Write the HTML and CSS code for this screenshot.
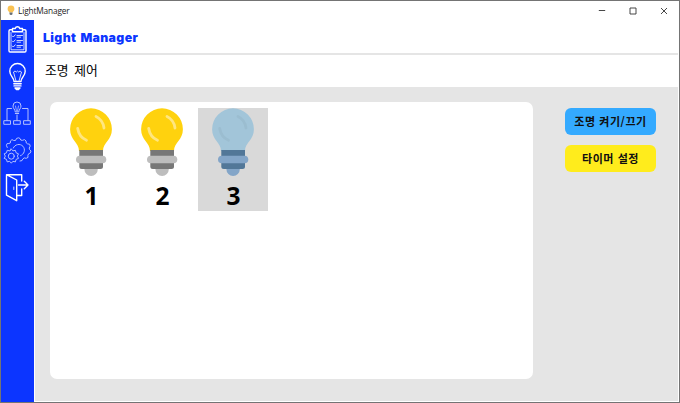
FILE: index.html
```html
<!DOCTYPE html>
<html lang="ko">
<head>
<meta charset="utf-8">
<title>LightManager</title>
<link rel="stylesheet" href="styles.css">
</head>
<body>
<svg class="defs" width="0" height="0" aria-hidden="true">
  <symbol id="lamp" viewBox="0 0 44 69">
    <path class="globe" d="M22 .3a20.9 20.9 0 0 1 20.9 20.9C42.9 32 34 34.500 34 43H10C10 34.500 1.100 32 1.100 21.200A20.900 20.900 0 0 1 22 .3Z"/>
    <path class="shine" d="M27 8.500Q34 12 35 20M8.700 20.500Q10 29 17.500 32.300"/>
    <rect class="ring" x="10.300" y="42" width="23.700" height="6.500"/>
    <path class="tip" d="M15.400 60h13.400v1.300a6.700 6.700 0 0 1-13.400 0Z"/>
    <path class="ring" d="M10.300 54H34v4.500a2.500 2.500 0 0 1-2.500 2.500H12.800a2.500 2.500 0 0 1-2.500-2.500Z"/>
    <rect class="tip" x="7" y="47.700" width="30.300" height="7.600" rx="3.800"/>
  </symbol>
</svg>
<div class="window">
  <header class="titlebar">
    <svg class="app-icon" viewBox="0 0 8 11"><path d="M4 .5a3.400 3.400 0 0 1 3.400 3.400C7.400 5.800 6 6.200 5.700 7.500H2.300C2 6.200.6 5.800.6 3.900A3.400 3.400 0 0 1 4 .5Z" fill="#f9c253"/><path d="M2.500 7.500h3v1.700L4.500 10h-1l-1-.8Z" fill="#687078"/></svg>
    <span class="app-name">LightManager</span>
    <div class="controls">
      <svg viewBox="0 0 8 8"><path d="M.8 3.500h6.400"/></svg>
      <svg viewBox="0 0 8 8"><path d="M1 1h6v6H1Z"/></svg>
      <svg viewBox="0 0 8 8"><path d="M1 1l6 6M7 1L1 7"/></svg>
    </div>
  </header>
  <div class="body">
    <nav class="sidebar">
      <svg viewBox="0 0 32 36"><path d="M11.500 9.700H9.200A1.200 1.200 0 0 0 8 10.900v19.900a1.200 1.200 0 0 0 1.200 1.200h14.600a1.200 1.200 0 0 0 1.200-1.200V10.900a1.200 1.200 0 0 0-1.200-1.200h-2.300M11.500 11.800V8.500h2.700a2.400 2.400 0 0 1 4.600 0h2.700v3.300Z"/><path class="thin" d="M10 12.500v17.300h13V12.500"/><path class="thin" d="M11.300 16l1 1 1.900-2.200M11.300 21l1 1 1.900-2.200M11.300 26l1 1 1.900-2.200M16 15.500h5.500M16 17.200h3.500M16 20.500h5.500M16 22.200h3.500M16 25.500h5.500M16 27.200h3.500"/></svg>
      <svg viewBox="0 0 32 36"><path d="M13 24.500c0-4-4.200-5.500-4.200-10.300a7.700 7.700 0 0 1 15.400 0C24.200 19 20 20.500 20 24.500ZM12.800 26.700h7.400M13 28.900h7M14 31h5l-1.500 1.500h-2Z"/><path class="thin" d="M15 24l-2.500-9 1.500-1 1.300 1 1.200-1 1.200 1 1.300-1 1.500 1L18 24"/></svg>
      <svg class="dim" viewBox="0 0 32 36"><path d="M14.200 17.500c0-2.200-2.200-2.800-2.200-5.500a4 4 0 0 1 8 0c0 2.700-2.200 3.300-2.200 5.500ZM14.300 19.500h3.400M16 21v5.500M10.500 14.500H6v12M21.500 14.500H27v12M3.200 26.700h6.300v3.600H3.200ZM13 26.700h6.300v3.600H13ZM23 26.700h6.300v3.600H23Z"/><path class="thin" d="M15.500 17l-1-5M16.500 17l1-5"/></svg>
      <svg class="dim" viewBox="0 0 32 36"><path d="M6.200 16.500Q4.500 14 6.200 12.500Q8 12.800 9.300 12Q8.800 9.500 11 8.600Q12.700 10 14.600 9.400Q15 6.800 17.500 6.800Q19.300 6.900 19.800 9.100Q21.500 9.800 23.500 8.600Q25.600 9.600 25.300 12Q26.300 13.200 28.600 13.200Q30 15.200 28.200 17Q28 18.500 30 20Q29.900 22.400 27.600 22.800Q26.500 24.200 27 26.400Q25.200 28 23.200 26.900Q21.600 27.600 21 29.600L19 30"/><path d="M12.300 17a5.800 5.800 0 1 1 7.200 7.700"/><path d="M10.300 18l1.600 1.900 2.500-.6.700 2.500 2.400 1-1.100 2.300 1.100 2.300-2.400 1-.7 2.500-2.500-.6-1.600 1.900-1.600-1.900-2.500.6-.7-2.500-2.300-1 1.100-2.300-1.100-2.300 2.300-1 .7-2.500 2.500.6Z"/><circle cx="10.300" cy="25.200" r="3"/></svg>
      <svg viewBox="0 0 32 36"><path d="M16 27.500h4.700V21M20.700 13V6.700H5.500v20.500l10.200 5.500V12L5.500 6.700M17.500 17h9.500M23.300 13.300L27 17l-3.700 3.700"/><path class="thin" d="M12.800 19v2.500"/></svg>
    </nav>
    <main class="main">
      <h1 class="brand">Light Manager</h1>
      <h2 class="subtitle">조명 제어</h2>
      <div class="workspace">
        <section class="panel">
          <div class="light on"><svg><use href="#lamp"/></svg><span>1</span></div>
          <div class="light on"><svg><use href="#lamp"/></svg><span>2</span></div>
          <div class="light off selected"><svg><use href="#lamp"/></svg><span>3</span></div>
        </section>
        <aside class="actions">
          <button class="toggle">조명 켜기/끄기</button>
          <button class="timer">타이머 설정</button>
        </aside>
      </div>
    </main>
  </div>
</div>
</body>
</html>
```

FILE: styles.css
```css
* { box-sizing: border-box; }
body { margin: 0; background: #fff; font-family: "Open Sans", "Noto Sans CJK KR", sans-serif; }
.defs { display: block; }
.window { width: 680px; height: 403px; border: 1px solid #747474; display: flex; flex-direction: column; overflow: hidden; }
.titlebar { height: 19px; flex: none; display: flex; align-items: center; padding-left: 6px; }
.app-icon { width: 8px; height: 11px; }
.app-name { margin-left: 3px; font-size: 8.3px; letter-spacing: -.15px; line-height: 12px; color: #222; }
.controls { margin-left: auto; display: flex; gap: 23px; padding-right: 11px; }
.controls svg { width: 8px; height: 8px; fill: none; stroke: #333; stroke-width: .9; }
.body { flex: 1; display: flex; min-height: 0; }
.sidebar { width: 33px; background: #0c35ff; display: flex; flex-direction: column; gap: 1px; }
.sidebar svg { width: 32px; height: 36px; fill: none; stroke: #fff; stroke-width: 1.4; stroke-linejoin: round; stroke-linecap: round; }
.sidebar .thin { stroke-width: .8; }
.sidebar .dim { stroke: #b3c0ff; stroke-width: 1; }
.main { flex: 1; display: flex; flex-direction: column; padding: 0 1px 1px; }
.brand { margin: 0; height: 35px; border-bottom: 2px solid #e5e5e5; padding-left: 8px; font: 900 12.3px/35px Inter, sans-serif; letter-spacing: .36px; word-spacing: 1.4px; color: #0c35ff; }
.subtitle { margin: 0; height: 32px; padding-left: 10px; font: 400 12.8px/30px "Noto Sans CJK KR", sans-serif; word-spacing: 2px; color: #000; }
.workspace { flex: 1; background: #e5e5e5; display: flex; padding: 15px 22px 22px 15px; justify-content: space-between; }
.panel { width: 483px; background: #fff; border-radius: 7px; display: flex; align-items: flex-start; gap: 1px; padding: 6px; }
.light { width: 70px; height: 103px; display: flex; flex-direction: column; align-items: center; }
.light svg { width: 44px; height: 69px; flex: none; }
.light span { font-size: 24.5px; font-weight: 700; line-height: 34px; margin-top: 2px; padding-left: 1px; color: #000; }
.selected { background: #d9d9d9; }
.globe { fill: var(--globe); }
.shine { fill: none; stroke: var(--shine); stroke-width: 2.8; stroke-linecap: round; }
.ring { fill: var(--ring); }
.tip { fill: var(--tip); }
.on { --globe: #ffd20e; --shine: #ffe680; --ring: #777; --tip: #bdbdbd; }
.off { --globe: #a2c5d9; --shine: #9bbdd0; --ring: #527798; --tip: #83a5c8; }
.actions { width: 91px; display: flex; flex-direction: column; gap: 10px; padding-top: 6px; }
.actions button { height: 27px; border: 0; border-radius: 6px; padding: 0; font: 700 11px/27px "Noto Sans CJK KR", sans-serif; letter-spacing: .55px; color: #101010; white-space: nowrap; }
.actions .toggle { background: #34aaff; }
.actions .timer { background: #ffec1c; }
```
